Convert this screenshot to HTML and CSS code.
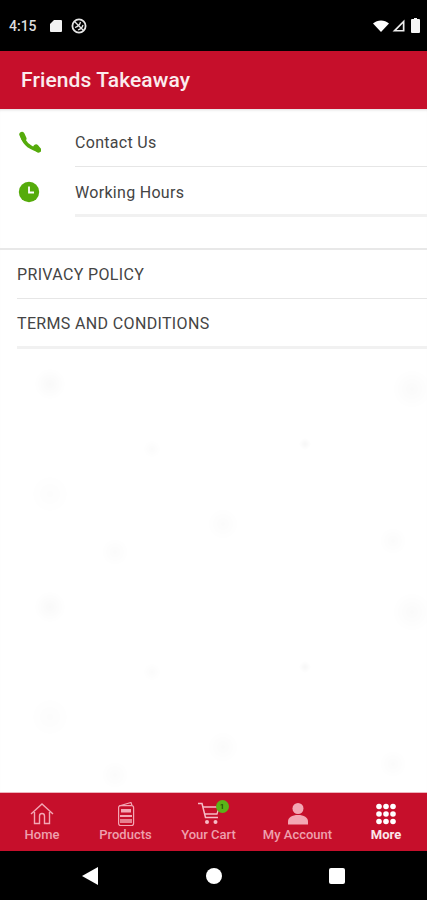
FILE: index.html
```html
<html>

<head>
    <meta http-equiv="Content-Type" content="text/html" charset="utf-8">
    <title>Friends Takeaway</title>
    <link rel="stylesheet" href="styles.css">
</head>

<body>
    <div class="status-bar">
        <span class="clock">4:15</span>
        <svg class="st-icon" viewBox="0 0 12 14" width="12" height="14">
            <path d="M4 1h7a1 1 0 0 1 1 1v10a1 1 0 0 1-1 1H1a1 1 0 0 1-1-1V5z" fill="#f2f2f2" />
        </svg>
        <svg class="st-icon" viewBox="0 0 16 16" width="16" height="16">
            <circle cx="8" cy="8" r="6.600" fill="none" stroke="#e6e6e6" stroke-width="1.800" />
            <path d="M3.500 3.500l9 9M4 9.500c3-1 5-3 5.500-5.500M7 12c2.500-1 4.500-3 5-5" fill="none" stroke="#e6e6e6" stroke-width="1.300" />
        </svg>
        <span class="status-right">
            <svg viewBox="0 0 16 12" width="16" height="12">
                <path d="M0 3.500C4.500 -.5 11.500 -.5 16 3.500L8 12z" fill="#fff" />
            </svg>
            <svg viewBox="0 0 13 13" width="13" height="13">
                <path d="M12.500 .5v12H.5zM10.800 4.500L4.500 11h6.300z" fill="#eee" fill-rule="evenodd" />
            </svg>
            <svg viewBox="0 0 9 15" width="9" height="15">
                <path d="M3 0h3v1h2a1 1 0 0 1 1 1v12a1 1 0 0 1-1 1H1a1 1 0 0 1-1-1V2a1 1 0 0 1 1-1h2z" fill="#f6f6f6" />
            </svg>
        </span>
    </div>

    <div class="app-header">Friends Takeaway</div>

    <div class="content">
        <div class="contact-list">
            <div class="contact-row">
                <svg class="row-icon" viewBox="0 0 24 24" width="24" height="24">
                    <path d="M5 5c1 6 6 12 15 15" fill="none" stroke="#55ab0b" stroke-width="3.600" stroke-linecap="round" />
                    <path d="M5 4.500l1.800 4M19 17l2.500 3" fill="none" stroke="#55ab0b" stroke-width="5.400" stroke-linecap="round" />
                </svg>
                <div class="row-text">Contact Us</div>
            </div>
            <div class="contact-row last">
                <svg class="row-icon" viewBox="0 0 24 24" width="24" height="24">
                    <circle cx="12" cy="12" r="10.200" fill="#55ab0b" />
                    <path d="M12 6.500v6h5" fill="none" stroke="#fff" stroke-width="1.800" />
                </svg>
                <div class="row-text">Working Hours</div>
            </div>
        </div>

        <div class="link-list">
            <div class="link-row">PRIVACY POLICY</div>
            <div class="link-row last">TERMS AND CONDITIONS</div>
        </div>

        <div class="texture"></div>
    </div>

    <div class="tab-bar">
        <div class="tab">
            <svg viewBox="0 0 24 24" width="24" height="24">
                <path d="M1 12L12 2l11 10M4.500 10v11.500h5V14a2.500 2.500 0 0 1 5 0v7.500h5V10" fill="none" stroke="#f3a7b4" stroke-width="1.400" />
            </svg>
            <span>Home</span>
        </div>
        <div class="tab">
            <svg viewBox="0 0 24 24" width="24" height="24">
                <path d="M5 4l12-3.500 1 3" fill="none" stroke="#f3a7b4" stroke-width="1.200" />
                <rect x="4.600" y="3.600" width="15" height="20" rx="2" fill="none" stroke="#f3a7b4" stroke-width="1.200" />
                <rect x="7" y="7" width="10" height="3.500" fill="#f3a7b4" />
                <rect x="6" y="13" width="12" height="2" fill="#f3a7b4" />
                <rect x="6" y="17" width="12" height="4" fill="#e8808f" />
            </svg>
            <span>Products</span>
        </div>
        <div class="tab">
            <div class="cart-wrap">
                <svg viewBox="0 0 24 24" width="24" height="24">
                    <path d="M1 1.500h4l3.500 14H21" fill="none" stroke="#f6bcc6" stroke-width="1.500" />
                    <path d="M6 5h16l-2 7H8" fill="none" stroke="#f6bcc6" stroke-width="1.300" />
                    <circle cx="10" cy="20" r="2" fill="#f6bcc6" />
                    <circle cx="18.500" cy="20" r="2" fill="#f6bcc6" />
                </svg>
                <span class="badge">1</span>
            </div>
            <span>Your Cart</span>
        </div>
        <div class="tab">
            <svg viewBox="0 0 24 24" width="24" height="24">
                <circle cx="12" cy="6.500" r="5.500" fill="#f3a7b4" />
                <path d="M2 22.500v-3c0-4 4-6.500 10-6.500s10 2.500 10 6.500v3z" fill="#f3a7b4" />
            </svg>
            <span>My Account</span>
        </div>
        <div class="tab active">
            <svg viewBox="0 0 24 24" width="24" height="24" fill="#fff">
                <circle cx="5" cy="4.500" r="2.800" /><circle cx="12" cy="4.500" r="2.800" /><circle cx="19" cy="4.500" r="2.800" />
                <circle cx="5" cy="12" r="2.800" /><circle cx="12" cy="12" r="2.800" /><circle cx="19" cy="12" r="2.800" />
                <circle cx="5" cy="19.500" r="2.800" /><circle cx="12" cy="19.500" r="2.800" /><circle cx="19" cy="19.500" r="2.800" />
            </svg>
            <span>More</span>
        </div>
    </div>

    <div class="nav-bar">
        <svg viewBox="0 0 16 18" width="16" height="18">
            <path d="M16 0v18L0 9z" fill="#fff" />
        </svg>
        <div class="nav-home"></div>
        <div class="nav-recent"></div>
    </div>
</body>

</html>
```

FILE: styles.css
```css
body {
    margin: 0;
    width: 427px;
    height: 900px;
    display: flex;
    flex-direction: column;
    overflow: hidden;
    font-family: Roboto, "Liberation Sans", sans-serif;
    background-color: #fff;
}

.status-bar {
    height: 51px;
    background-color: #000;
    display: flex;
    align-items: center;
    padding: 0 7px 0 9px;
    box-sizing: border-box;
    flex-shrink: 0;
}

.clock {
    color: #ddd;
    font-size: 14px;
    font-weight: 500;
    margin-right: 13px;
}

.st-icon + .st-icon {
    margin-left: 9px;
}

.status-right {
    margin-left: auto;
    display: flex;
    align-items: center;
    gap: 3px;
}

.status-right svg:last-child {
    margin-left: 3px;
}

.app-header {
    height: 58px;
    background-color: #c60f2b;
    color: #fbecee;
    font-size: 21px;
    font-weight: 500;
    letter-spacing: .1px;
    line-height: 58px;
    padding-left: 21px;
    flex-shrink: 0;
}

.content {
    flex: 1;
    display: flex;
    flex-direction: column;
    background-color: #fff;
    box-shadow: inset 0 3px 3px -2px #ddd;
}

.contact-list {
    padding-top: 8px;
}

.contact-row {
    height: 49.500px;
    display: flex;
    align-items: center;
}

.contact-row.last {
    height: 50px;
}

.row-icon {
    margin-left: 17px;
    flex-shrink: 0;
}

.row-text {
    margin-left: 34px;
    flex: 1;
    height: 100%;
    display: flex;
    align-items: center;
    border-bottom: 1.500px solid #e6e6e6;
    box-sizing: border-box;
    padding-top: 2px;
    font-size: 16px;
    letter-spacing: .3px;
    color: #444;
}

.contact-row.last .row-text {
    border-bottom: 3px solid #f1f1f1;
    padding-top: 4px;
}

.link-list {
    margin-top: 31.500px;
    border-top: 2px solid #e8e8e8;
}

.link-row {
    height: 49px;
    margin-left: 17px;
    box-sizing: border-box;
    border-bottom: 1.500px solid #e6e6e6;
    display: flex;
    align-items: center;
    font-size: 16px;
    letter-spacing: .35px;
    color: #444;
}

.link-row.last {
    height: 50px;
    border-bottom: 3px solid #f1f1f1;
    padding-top: 2px;
}

/* faint pattern behind the page, repeats every 223px */
.texture {
    flex: 1;
    background-image:
        radial-gradient(circle at 50px 35px, rgba(0, 0, 0, .022) 0, transparent 16px),
        radial-gradient(circle at 412px 40px, rgba(0, 0, 0, .018) 0, transparent 20px),
        radial-gradient(circle at 223px 175px, rgba(0, 0, 0, .016) 0, transparent 16px),
        radial-gradient(circle at 115px 203px, rgba(0, 0, 0, .014) 0, transparent 14px),
        radial-gradient(circle at 393px 192px, rgba(0, 0, 0, .014) 0, transparent 14px),
        radial-gradient(circle at 152px 100px, rgba(0, 0, 0, .014) 0, transparent 9px),
        radial-gradient(circle at 305px 95px, rgba(0, 0, 0, .03) 0, transparent 6px),
        radial-gradient(circle at 50px 145px, rgba(0, 0, 0, .012) 0, transparent 20px);
    background-size: 427px 223px;
    background-repeat: repeat-y;
}

.tab-bar {
    height: 59px;
    background-color: #c60f2b;
    border-top: 1px solid #eeb4bd;
    box-sizing: border-box;
    display: grid;
    grid-template-columns: 84px 83px 83px 95px 82px;
    flex-shrink: 0;
}

.tab {
    display: flex;
    flex-direction: column;
    align-items: center;
    padding-top: 9px;
    font-size: 13px;
    font-weight: 500;
    color: #eea0ae;
    line-height: 14px;
    gap: 2px;
}

.tab.active {
    color: #fbe6e9;
    font-weight: 700;
}

.cart-wrap {
    position: relative;
    height: 24px;
}

.badge {
    position: absolute;
    top: -2px;
    right: -8px;
    width: 13px;
    height: 13px;
    border-radius: 50%;
    background-color: #5bb318;
    color: #1c4a00;
    font-size: 8px;
    line-height: 13px;
    text-align: center;
}

.nav-bar {
    height: 49px;
    background-color: #000;
    display: flex;
    align-items: center;
    flex-shrink: 0;
    padding-left: 82px;
    box-sizing: border-box;
}

.nav-home {
    width: 16px;
    height: 16px;
    border-radius: 50%;
    background-color: #fff;
    margin-left: 108px;
}

.nav-recent {
    width: 16px;
    height: 16px;
    border-radius: 2px;
    background-color: #fff;
    margin-left: 107px;
}
```
